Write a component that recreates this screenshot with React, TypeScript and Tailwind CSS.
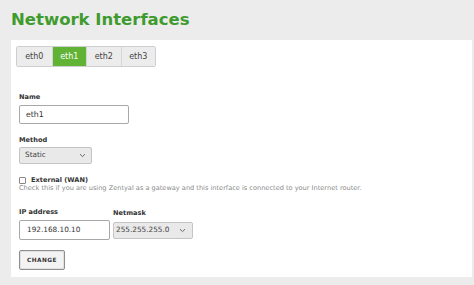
import React from "react";

function Chevron() {
  return (
    <svg width="7" height="5" viewBox="0 0 7 5" className="shrink-0">
      <path d="M1 1.2 L3.5 3.6 L6 1.2" fill="none" stroke="#666" strokeWidth="1" />
    </svg>
  );
}

export default function App() {
  const tabs = ["eth0", "eth1", "eth2", "eth3"];
  return (
    <div
      className="w-[474px] h-[285px] bg-[#ececec] pl-[11px] pr-[2px] overflow-hidden"
      style={{ fontFamily: '"DejaVu Sans", Verdana, sans-serif' }}
    >
      <div className="h-[40px] flex items-center">
        <h1 className="text-[16.5px] font-bold text-[#3f9b2e] leading-none mt-[1px]">Network Interfaces</h1>
      </div>
      <div className="h-[237px] bg-white pl-[5px] pt-[6px]">
        <div className="flex w-fit h-[21px] border border-[#cfcfcf] rounded-[2px] overflow-hidden">
          {tabs.map((t, i) => (
            <div
              key={t}
              className={
                "w-[34.5px] flex items-center justify-center text-[8px] " +
                (i === 1 ? "bg-[#60b334] text-white" : "bg-[#ececec] text-[#444]") +
                (i > 0 ? " border-l border-[#d6d6d6]" : "")
              }
            >
              {t}
            </div>
          ))}
        </div>
        <div className="pl-[3px]">
          <div className="mt-[26px] h-[8px] leading-[8px] text-[6.6px] font-bold text-[#333]">Name</div>
          <div className="mt-[4px] w-[110px] h-[19px] border border-[#a8a8a8] rounded-[2px] flex items-center pl-[6px] text-[7.8px] text-[#333]">
            eth1
          </div>
          <div className="mt-[12px] h-[8px] leading-[8px] text-[6.6px] font-bold text-[#333]">Method</div>
          <div className="mt-[3px] w-[73px] h-[17px] border border-[#c4c4c4] rounded-[2px] bg-[#e9e9e9] flex items-center justify-between pl-[5px] pr-[5px] text-[7.3px] text-[#444]">
            <span>Static</span>
            <Chevron />
          </div>
          <div className="mt-[12px] h-[9px] flex items-center gap-[5px]">
            <div className="w-[7px] h-[7px] border border-[#888] rounded-[1px] bg-white" />
            <span className="text-[6.6px] font-bold text-[#333] leading-[9px]">External (WAN)</span>
          </div>
          <div className="h-[7px] leading-[7px] text-[6.6px] text-[#8a8a8a] whitespace-nowrap">
            Check this if you are using Zentyal as a gateway and this interface is connected to your Internet router.
          </div>
          <div className="mt-[16px] flex gap-[3px]">
            <div className="w-[91px] h-[8px] leading-[8px] text-[6.6px] font-bold text-[#333]">IP address</div>
            <div className="h-[8px] leading-[8px] text-[6.6px] font-bold text-[#333] mt-[1px]">Netmask</div>
          </div>
          <div className="mt-[3px] flex items-center gap-[3px]">
            <div className="w-[91px] h-[20px] border border-[#a8a8a8] rounded-[2px] flex items-center pl-[7px] text-[7.3px] text-[#333]">
              192.168.10.10
            </div>
            <div className="w-[80px] h-[17px] border border-[#c4c4c4] rounded-[2px] bg-[#e9e9e9] flex items-center justify-between pl-[2px] pr-[6px] text-[7.3px] text-[#444]">
              <span>255.255.255.0</span>
              <Chevron />
            </div>
          </div>
          <div className="mt-[10px] w-[46px] h-[20px] border border-[#8f8f8f] rounded-[2px] bg-[#f3f3f3] flex items-center justify-center text-[5.8px] font-bold tracking-[0.5px] text-[#333] shadow-[inset_0_0_0_1px_#e0e0e0]">
            CHANGE
          </div>
        </div>
      </div>
    </div>
  );
}
